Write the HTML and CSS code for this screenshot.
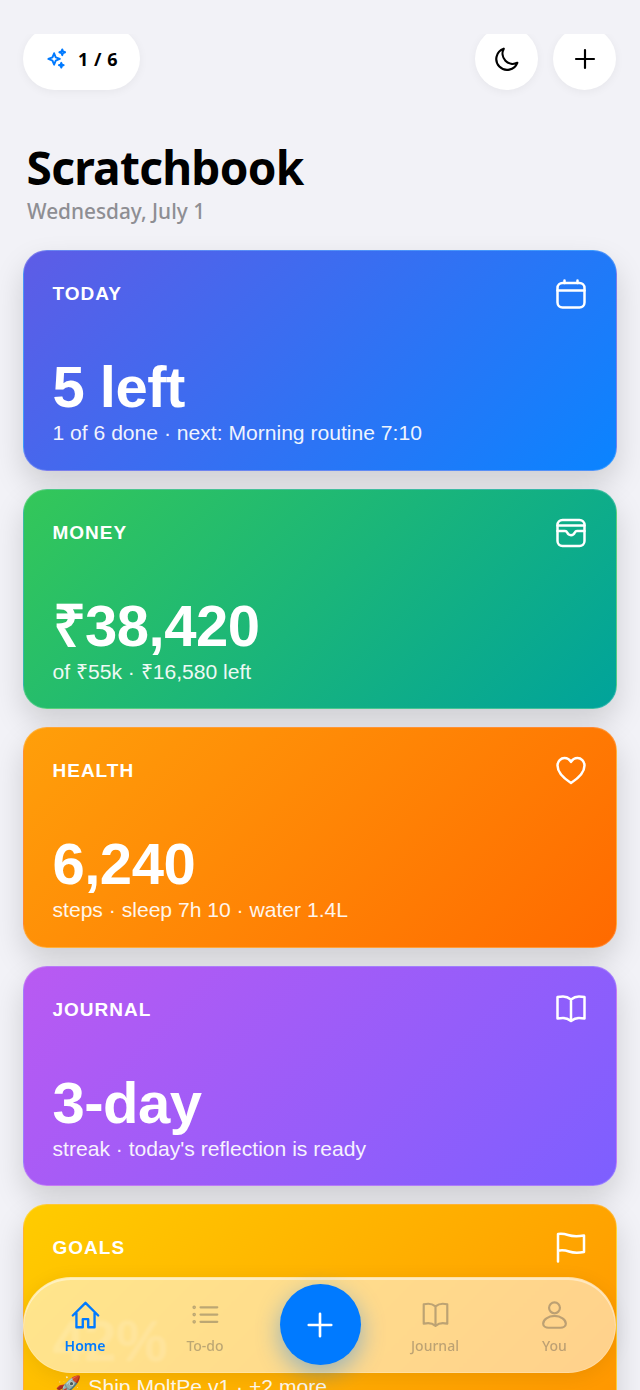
FILE: index.html
```html
<!DOCTYPE html>
<html lang="en">
<head>
<meta charset="utf-8">
<title>Scratchbook</title>
<link rel="stylesheet" href="styles.css">
</head>
<body>
<main class="screen">
  <header class="topbar">
    <div class="pill">
      <svg class="spark" viewBox="0 0 24 24" fill="none" stroke="currentColor" stroke-width="2" stroke-linejoin="round"><path d="M9.500 6.500l1.700 4.300 4.300 1.700-4.300 1.700-1.700 4.300-1.700-4.300-4.300-1.700 4.300-1.700z"/><path d="M18 2.500l.8 2.200 2.200.8-2.200.8-.8 2.200-.8-2.200-2.200-.8 2.200-.8z"/><path d="M17 16.500l.7 1.800 1.800.7-1.800.7-.7 1.800-.7-1.800-1.800-.7 1.800-.7z"/></svg>
      <span>1 / 6</span>
    </div>
    <div class="actions">
      <button class="round"><svg viewBox="0 0 24 24" fill="none" stroke="currentColor" stroke-width="2" stroke-linecap="round" stroke-linejoin="round"><path d="M21.500 15.500A9.500 9.500 0 0 1 9 2.500a10 10 0 1 0 12.500 13z"/></svg></button>
      <button class="round"><svg viewBox="0 0 24 24" fill="none" stroke="currentColor" stroke-width="2" stroke-linecap="round"><path d="M12 3.700v16.600M3.700 12h16.600"/></svg></button>
    </div>
  </header>
  <h1 class="title">Scratchbook</h1>
  <p class="date">Wednesday, July 1</p>
  <section class="cards">
    <article class="card blue">
      <div class="card-head"><span class="label">TODAY</span>
        <svg class="ico" viewBox="0 0 32 32" fill="none" stroke="currentColor" stroke-width="2.500" stroke-linecap="round" stroke-linejoin="round"><rect x="2.500" y="5" width="27" height="24.500" rx="5"/><path d="M2.500 12.500h27M9.500 2.500V5M22.500 2.500V5"/></svg></div>
      <div class="value">5 left</div>
      <div class="sub">1 of 6 done · next: Morning routine 7:10</div>
    </article>
    <article class="card green">
      <div class="card-head"><span class="label">MONEY</span>
        <svg class="ico" viewBox="0 0 32 32" fill="none" stroke="currentColor" stroke-width="2.500" stroke-linecap="round" stroke-linejoin="round"><rect x="2.500" y="3" width="27" height="26" rx="5"/><path d="M2.500 8.500h27M2.500 14H10c1.200 0 1.700.5 2.200 1.600.7 1.600 1.800 2.600 3.800 2.600s3.100-1 3.800-2.600c.5-1.100 1-1.600 2.200-1.600h7.500"/></svg></div>
      <div class="value">₹38,420</div>
      <div class="sub">of ₹55k · ₹16,580 left</div>
    </article>
    <article class="card orange">
      <div class="card-head"><span class="label">HEALTH</span>
        <svg class="ico" viewBox="0 0 32 32" fill="none" stroke="currentColor" stroke-width="2.500" stroke-linecap="round" stroke-linejoin="round"><path d="M16 28C9 23.500 2.500 18 2.500 10.500 2.500 6 6 3 9.500 3c2.800 0 5 1.300 6.500 4 1.500-2.700 3.700-4 6.500-4 3.500 0 7 3 7 7.500C29.500 18 23 23.500 16 28z"/></svg></div>
      <div class="value">6,240</div>
      <div class="sub">steps · sleep 7h 10 · water 1.4L</div>
    </article>
    <article class="card purple">
      <div class="card-head"><span class="label">JOURNAL</span>
        <svg class="ico" viewBox="0 0 32 32" fill="none" stroke="currentColor" stroke-width="2.500" stroke-linecap="round" stroke-linejoin="round"><path d="M16 5.500c-2.500-2-5-3-8-3-2 0-3.500.2-5.500.6V24.500c2-.4 3.500-.6 5.500-.6 3 0 5.500 1 8 3 2.500-2 5-3 8-3 2 0 3.500.2 5.500.6V3.100C27.500 2.700 26 2.500 24 2.500c-3 0-5.500 1-8 3zM16 5.500v21"/></svg></div>
      <div class="value">3-day</div>
      <div class="sub">streak · today's reflection is ready</div>
    </article>
    <article class="card amber">
      <div class="card-head"><span class="label">GOALS</span>
        <svg class="ico" viewBox="0 0 32 32" fill="none" stroke="currentColor" stroke-width="2.500" stroke-linecap="round" stroke-linejoin="round"><path d="M3 29.500V2c4-.6 7 0 10 1s8 1.800 16 .5v16.500c-8 1.300-12 .5-15-.5s-7-1.500-11-.8"/></svg></div>
      <div class="value under-glass">42%</div>
      <div class="sub"><span class="emoji">🚀</span> Ship MoltPe v1 · +2 more</div>
    </article>
  </section>
</main>
<nav class="tabbar">
  <a class="tab active"><svg viewBox="0 0 32 32" fill="none" stroke="currentColor" stroke-width="2.600" stroke-linecap="round" stroke-linejoin="round"><path d="M2 16L16 2l14 14M6 13v16h7v-9h6v9h7V13"/></svg><span>Home</span></a>
  <a class="tab"><svg viewBox="0 0 32 32" fill="none" stroke="currentColor" stroke-width="2.400" stroke-linecap="round"><path d="M10.500 7H29M10.500 15H29M10.500 23H29"/><circle cx="3.500" cy="7" r=".8"/><circle cx="3.500" cy="15" r=".8"/><circle cx="3.500" cy="23" r=".8"/></svg><span>To-do</span></a>
  <div class="fab-slot"><button class="fab"><svg viewBox="0 0 32 32" fill="none" stroke="currentColor" stroke-width="2.800" stroke-linecap="round"><path d="M16 4v24M4 16h24"/></svg></button></div>
  <a class="tab"><svg viewBox="0 0 32 32" fill="none" stroke="currentColor" stroke-width="2.400" stroke-linecap="round" stroke-linejoin="round"><path d="M16 6c-2.500-2-5-3-8-3-2 0-3 .2-5 .6V25c2-.4 3-.6 5-.6 3 0 5.500 1 8 3 2.500-2 5-3 8-3 2 0 3 .2 5 .6V3.600C27 3.200 26 3 24 3c-3 0-5.500 1-8 3zM16 6v21"/></svg><span>Journal</span></a>
  <a class="tab"><svg viewBox="0 0 32 32" fill="none" stroke="currentColor" stroke-width="2.400" stroke-linecap="round" stroke-linejoin="round"><circle cx="16" cy="7.500" r="6"/><path d="M16 16.500c-7 0-12.500 4-12.500 8.500 0 3 3 4.500 6 4.500h13c3 0 6-1.500 6-4.500 0-4.500-5.500-8.500-12.500-8.500z"/></svg><span>You</span></a>
</nav>
</body>
</html>
```
FILE: styles.css
```css
* { box-sizing: border-box; }
html, body { margin: 0; height: 100%; overflow: hidden; background: #f2f2f7; }
body { position: relative; font-family: "Liberation Sans", Arial, sans-serif; }
.screen { margin-top: 34px; height: 1356px; overflow: hidden; padding: 0 23px; }
.topbar { display: flex; justify-content: space-between; align-items: flex-start; margin-top: -7px; padding-right: 1px; }
.pill { height: 63px; width: 117px; border-radius: 32px; background: #fff; display: flex; align-items: center; justify-content: center; gap: 10px; box-shadow: 0 2px 10px rgba(0,0,0,.05); font: 700 18px "Noto Sans", sans-serif; color: #000; letter-spacing: .5px; }
.spark { width: 23px; height: 23px; color: #007aff; }
.actions { display: flex; gap: 15px; }
.round { width: 63px; height: 63px; border: 0; border-radius: 50%; background: #fff; color: #000; padding: 0; display: flex; align-items: center; justify-content: center; box-shadow: 0 2px 10px rgba(0,0,0,.05); }
.round svg { width: 26px; height: 26px; }
.title { margin: 49px 0 0 3.500px; font: 700 46px/56px "Noto Sans", sans-serif; letter-spacing: -.72px; color: #000; }
.date { margin: 2px 0 24px 4px; font: 500 20.800px/29px "Noto Sans", sans-serif; color: #8e8e93; }
.cards { display: flex; flex-direction: column; gap: 18px; }
.card { height: 220.500px; flex: none; border-radius: 24px; padding: 30px 29.500px 0 28.500px; color: #fff; border: 1px solid rgba(255,255,255,.2); box-shadow: 0 14px 30px rgba(0,0,0,.15); }
.card-head { display: flex; justify-content: space-between; align-items: flex-start; height: 45px; }
.label { font-weight: 700; font-size: 19px; line-height: 26px; letter-spacing: 1px; }
.ico { width: 32px; height: 32px; margin-top: -3px; flex: none; }
.value { margin-top: 31px; font-weight: 700; font-size: 58px; line-height: 60px; letter-spacing: -.5px; }
.under-glass { opacity: .14; }
.sub { font-size: 21.100px; line-height: 28px; margin-top: 2px; opacity: .92; }
.emoji { margin: 0 2px 0 2px; }
.blue { background: linear-gradient(135deg, #5e5ce6, #0a84ff); }
.green { background: linear-gradient(135deg, #34c759, #00a39b); }
.orange { background: linear-gradient(135deg, #ff9f0a, #ff6a00); }
.purple { background: linear-gradient(135deg, #b95af2, #7d5fff); }
.amber { background: linear-gradient(135deg, #ffcc00, #ff9500); }
.tabbar { position: absolute; left: 23px; top: 1277px; width: 593px; height: 96px; border-radius: 48px; display: grid; grid-template-columns: 122px 118px 112px 118px 121px; background: rgba(255,255,255,.55); border: 1px solid rgba(255,255,255,.2); -webkit-backdrop-filter: blur(1.500px); backdrop-filter: blur(1.500px); box-shadow: 0 4px 20px rgba(0,0,0,.08), inset 0 2px 0 rgba(255,255,255,.45); }
.tab { display: flex; flex-direction: column; align-items: center; padding-top: 23px; color: rgba(60,60,67,.34); font: 500 14px/20px "Noto Sans", sans-serif; }
.tab svg { width: 29px; height: 29px; margin-bottom: 6px; }
.tab.active { color: #007aff; font-weight: 600; }
.fab-slot { display: flex; justify-content: center; align-items: center; }
.fab { width: 81px; height: 81px; flex: none; border: 0; padding: 0; margin-top: -1px; border-radius: 50%; background: #007aff; color: #fff; display: flex; align-items: center; justify-content: center; box-shadow: 0 8px 24px rgba(0,122,255,.42); }
.fab svg { width: 30px; height: 30px; }
```
